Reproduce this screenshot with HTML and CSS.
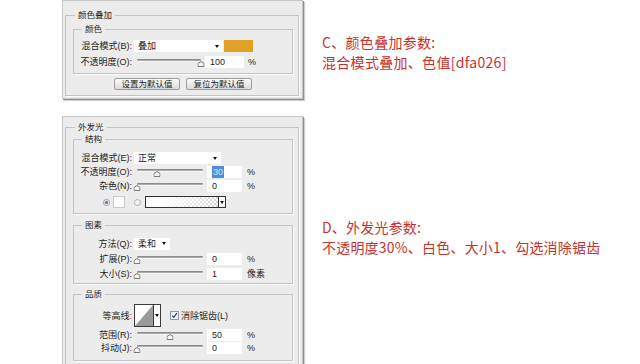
FILE: index.html
```html
<!DOCTYPE html>
<html lang="zh-CN">
<head>
<meta charset="utf-8">
<title>图层样式参数</title>
<link rel="stylesheet" href="styles.css">
</head>
<body>
<div class="page">
  <section class="row row-c">
    <div class="panel panel-c">
      <fieldset class="group">
        <legend>颜色叠加</legend>
        <fieldset class="sub sub-color">
          <legend>颜色</legend>
          <div class="form rows-16">
            <span class="lbl">混合模式(B):</span>
            <div class="ctrl">
              <span class="select w89"><span>叠加</span><i class="caret"></i></span>
              <span class="swatch-gold"></span>
            </div>
            <span class="lbl">不透明度(O):</span>
            <div class="ctrl">
              <span class="slider s70"><i class="track"></i><span class="rail"><svg class="thumb" style="left:100%" width="7" height="6" viewBox="0 0 7 6"><polygon points="0.5,5.5 0.5,2.5 3.5,0.5 6.5,2.5 6.5,5.5" fill="#f6f6f6" stroke="#7a7a7a"/></svg></span></span>
              <span class="num w39">100</span><span class="unit u4">%</span>
            </div>
          </div>
        </fieldset>
        <div class="buttons"><button class="btn">设置为默认值</button><button class="btn">复位为默认值</button></div>
      </fieldset>
    </div>
    <div class="note note-c">
      <p>C、颜色叠加参数:</p>
      <p>混合模式叠加、色值[dfa026]</p>
    </div>
  </section>

  <section class="row row-d">
    <div class="panel panel-d">
      <fieldset class="group group-d">
        <legend>外发光</legend>
        <fieldset class="sub sub-struct">
          <legend>结构</legend>
          <div class="form rows-14">
            <span class="lbl">混合模式(E):</span>
            <div class="ctrl"><span class="select w87"><span>正常</span><i class="caret"></i></span></div>
            <span class="lbl">不透明度(O):</span>
            <div class="ctrl">
              <span class="slider s72"><i class="track"></i><span class="rail"><svg class="thumb" style="left:30%" width="7" height="6" viewBox="0 0 7 6"><polygon points="0.5,5.5 0.5,2.5 3.5,0.5 6.5,2.5 6.5,5.5" fill="#f6f6f6" stroke="#7a7a7a"/></svg></span></span>
              <span class="num w35"><span class="sel">30</span></span><span class="unit u5">%</span>
            </div>
            <span class="lbl">杂色(N):</span>
            <div class="ctrl">
              <span class="slider s72"><i class="track"></i><span class="rail"><svg class="thumb" style="left:0%" width="7" height="6" viewBox="0 0 7 6"><polygon points="0.5,5.5 0.5,2.5 3.5,0.5 6.5,2.5 6.5,5.5" fill="#f6f6f6" stroke="#7a7a7a"/></svg></span></span>
              <span class="num w35">0</span><span class="unit u5">%</span>
            </div>
          </div>
          <div class="color-row">
            <svg class="radio" width="7" height="7" viewBox="0 0 7 7"><circle cx="3.5" cy="3.5" r="3" fill="#f3f3f3" stroke="#9a9a9a"/><circle cx="3.5" cy="3.5" r="1.6" fill="#4a78b8"/></svg>
            <span class="swatch-white"></span>
            <svg class="radio radio-2" width="7" height="7" viewBox="0 0 7 7"><circle cx="3.5" cy="3.5" r="3" fill="#f3f3f3" stroke="#b0b0b0"/></svg>
            <span class="gradient-box"></span><span class="grad-arrow"><i class="caret"></i></span>
          </div>
        </fieldset>

        <fieldset class="sub sub-elem">
          <legend>图素</legend>
          <div class="form rows-15">
            <span class="lbl">方法(Q):</span>
            <div class="ctrl"><span class="select w36"><span>柔和</span><i class="caret"></i></span></div>
            <span class="lbl">扩展(P):</span>
            <div class="ctrl">
              <span class="slider s72"><i class="track"></i><span class="rail"><svg class="thumb" style="left:0%" width="7" height="6" viewBox="0 0 7 6"><polygon points="0.5,5.5 0.5,2.5 3.5,0.5 6.5,2.5 6.5,5.5" fill="#f6f6f6" stroke="#7a7a7a"/></svg></span></span>
              <span class="num w35">0</span><span class="unit u5">%</span>
            </div>
            <span class="lbl">大小(S):</span>
            <div class="ctrl">
              <span class="slider s72"><i class="track"></i><span class="rail"><svg class="thumb" style="left:0%" width="7" height="6" viewBox="0 0 7 6"><polygon points="0.5,5.5 0.5,2.5 3.5,0.5 6.5,2.5 6.5,5.5" fill="#f6f6f6" stroke="#7a7a7a"/></svg></span></span>
              <span class="num w35">1</span><span class="unit u5">像素</span>
            </div>
          </div>
        </fieldset>

        <fieldset class="sub sub-quality">
          <legend>品质</legend>
          <div class="form rows-q">
            <span class="lbl">等高线:</span>
            <div class="ctrl">
              <span class="contour">
                <svg width="20" height="23" viewBox="0 0 20 23"><rect x="0.5" y="0.5" width="19" height="22" fill="#fff" stroke="#3a3a3a"/><polygon points="1,22 19,1 19,22" fill="#9a9a9a"/></svg>
                <span class="contour-arrow"><i class="caret"></i></span>
              </span>
              <svg class="check" width="9" height="9" viewBox="0 0 9 9"><rect x="0.5" y="0.5" width="8" height="8" fill="#eef2fa" stroke="#8c9bb8"/><path d="M2.2 4.6 L3.8 6.4 L6.9 2.2" fill="none" stroke="#2b3548" stroke-width="1.1"/></svg>
              <span class="check-label">消除锯齿(L)</span>
            </div>
            <span class="lbl">范围(R):</span>
            <div class="ctrl">
              <span class="slider s72"><i class="track"></i><span class="rail"><svg class="thumb" style="left:50%" width="7" height="6" viewBox="0 0 7 6"><polygon points="0.5,5.5 0.5,2.5 3.5,0.5 6.5,2.5 6.5,5.5" fill="#f6f6f6" stroke="#7a7a7a"/></svg></span></span>
              <span class="num w35">50</span><span class="unit u5">%</span>
            </div>
            <span class="lbl">抖动(J):</span>
            <div class="ctrl">
              <span class="slider s72"><i class="track"></i><span class="rail"><svg class="thumb" style="left:0%" width="7" height="6" viewBox="0 0 7 6"><polygon points="0.5,5.5 0.5,2.5 3.5,0.5 6.5,2.5 6.5,5.5" fill="#f6f6f6" stroke="#7a7a7a"/></svg></span></span>
              <span class="num w35">0</span><span class="unit u5">%</span>
            </div>
          </div>
        </fieldset>
      </fieldset>
    </div>
    <div class="note note-d">
      <p>D、外发光参数:</p>
      <p>不透明度30%、白色、大小1、勾选消除锯齿</p>
    </div>
  </section>
</div>
</body>
</html>
```

FILE: styles.css
```css
html, body {
  margin: 0;
  padding: 0;
  overflow: hidden;
  background: #fff;
}

body {
  font-family: "Liberation Sans", "Noto Sans CJK SC", sans-serif;
  font-size: 9px;
  color: #1e1e1e;
}

.page {
  padding-left: 62px;
  display: flex;
  flex-direction: column;
  gap: 17px;
}

.row {
  display: flex;
  align-items: flex-start;
  gap: 19px;
}

.panel {
  box-sizing: border-box;
  width: 241px;
  flex: none;
  background: #ececec;
  border: 1px solid #c6c6c6;
  box-shadow: 1px 1px 0 #8f8f8f, 2px 2px 1px #cfcfcf;
  padding: 8px 3px 2px 2px;
}

.panel-d {
  padding-top: 4px;
  height: 300px;
}

fieldset {
  margin: 0;
  min-width: 0;
  border: 1px solid #c4c4c4;
  box-shadow: 1px 1px 0 #fbfbfb;
}

legend {
  font-size: 8.5px;
  line-height: 12px;
  padding: 0 3px;
  color: #1e1e1e;
}

.group {
  padding: 2px 5px 5px 7px;
}

.group > legend {
  margin-left: 2px;
}

.group-d {
  padding-top: 0;
  padding-bottom: 40px;
}

.sub {
  padding: 3px 0 3px 0;
}

.sub > legend {
  margin-left: 8px;
}

.sub-struct { padding: 6px 0 2px 0; }
.sub-elem { margin-top: 5px; padding: 5px 0 2px 0; }
.sub-quality { margin-top: 4px; padding: 3px 0 6px 0; }

.form {
  display: grid;
  grid-template-columns: 58px 1fr;
  column-gap: 2px;
  align-items: center;
}

.rows-16 { grid-auto-rows: 16px; }
.rows-14 { grid-auto-rows: 14px; }
.rows-15 { grid-auto-rows: 15px; }
.rows-q { grid-template-rows: 25px 13px 13px; }

.lbl {
  text-align: right;
  white-space: nowrap;
  line-height: 12px;
}

.ctrl {
  display: flex;
  align-items: center;
  height: 100%;
}

.select {
  box-sizing: border-box;
  height: 12px;
  background: #fff;
  display: flex;
  align-items: center;
  justify-content: space-between;
  padding: 0 4px 0 4px;
  line-height: 12px;
}

.w89 { width: 89px; }
.w87 { width: 87px; }
.w36 { width: 36px; }

.caret {
  display: block;
  width: 0;
  height: 0;
  border-left: 2.5px solid transparent;
  border-right: 2.5px solid transparent;
  border-top: 3px solid #111;
}

.swatch-gold {
  width: 29px;
  height: 12px;
  margin-left: 1px;
  background: #dfa026;
}

.slider {
  position: relative;
  height: 12px;
  flex: none;
}

.s70 { width: 70px; }
.s72 { width: 72px; }

.track {
  position: absolute;
  left: 3px;
  right: 3px;
  top: 3px;
  height: 2px;
  border-radius: 1px;
  background: linear-gradient(#7d7d7d, #b9b9b9);
  box-shadow: 0 1px 0 #f7f7f7;
}

.rail {
  position: absolute;
  left: 3px;
  right: 3px;
  top: 5px;
  height: 6px;
}

.thumb {
  position: absolute;
  top: 0;
  transform: translateX(-50%);
}

.num {
  box-sizing: border-box;
  height: 12px;
  line-height: 12px;
  background: #fff;
  padding-left: 5px;
  margin-left: 1px;
}

.w39 { width: 39px; }
.w35 { width: 35px; margin-left: 1px; }

.sel {
  display: inline-block;
  background: #4b8fdb;
  color: #d8e6f6;
  padding: 0 1px;
}

.unit { white-space: nowrap; }
.u4 { margin-left: 4px; }
.u5 { margin-left: 5px; }

.color-row {
  display: flex;
  align-items: center;
  height: 18px;
  padding-left: 29px;
}

.swatch-white {
  box-sizing: border-box;
  width: 12px;
  height: 12px;
  margin-left: 3px;
  background: #fff;
  border: 1px solid #c9c9c9;
}

.radio-2 { margin-left: 9px; }

.gradient-box {
  box-sizing: border-box;
  width: 73px;
  height: 12px;
  margin-left: 4px;
  border: 1px solid #333;
  border-right: none;
  background:
    linear-gradient(to right, #fff 20%, rgba(255,255,255,0.2)),
    repeating-conic-gradient(#c9c9c9 0 25%, #fff 0 50%) 0 0 / 4px 4px;
}

.grad-arrow {
  box-sizing: border-box;
  width: 8px;
  height: 12px;
  border: 1px solid #333;
  background: #fff;
  display: flex;
  align-items: center;
  justify-content: center;
}

.contour {
  display: flex;
  align-items: stretch;
  height: 23px;
}

.contour svg { display: block; }

.contour-arrow {
  box-sizing: border-box;
  width: 7px;
  border: 1px solid #3a3a3a;
  border-left: none;
  background: #fff;
  display: flex;
  align-items: center;
  justify-content: center;
}

.check { margin-left: 9px; }

.check-label {
  margin-left: 2px;
  white-space: nowrap;
}

.buttons {
  display: flex;
  justify-content: center;
  gap: 6px;
  margin-top: 4px;
}

.btn {
  box-sizing: border-box;
  width: 66px;
  height: 12px;
  padding: 0;
  font-family: "Liberation Sans", "Noto Sans CJK SC", sans-serif;
  font-size: 8.5px;
  line-height: 10px;
  color: #1e1e1e;
  border: 1px solid #9c9c9c;
  border-radius: 2px;
  background: linear-gradient(#fbfbfb, #dadada);
}

.note {
  font-family: "Noto Sans CJK SC", "Liberation Sans", sans-serif;
  font-size: 14px;
  line-height: 20px;
  color: #c8322c;
}

.note p { margin: 0; }

.note-c { padding-top: 32px; letter-spacing: 0.3px; }
.note-d { padding-top: 101px; letter-spacing: 0.2px; }
```
